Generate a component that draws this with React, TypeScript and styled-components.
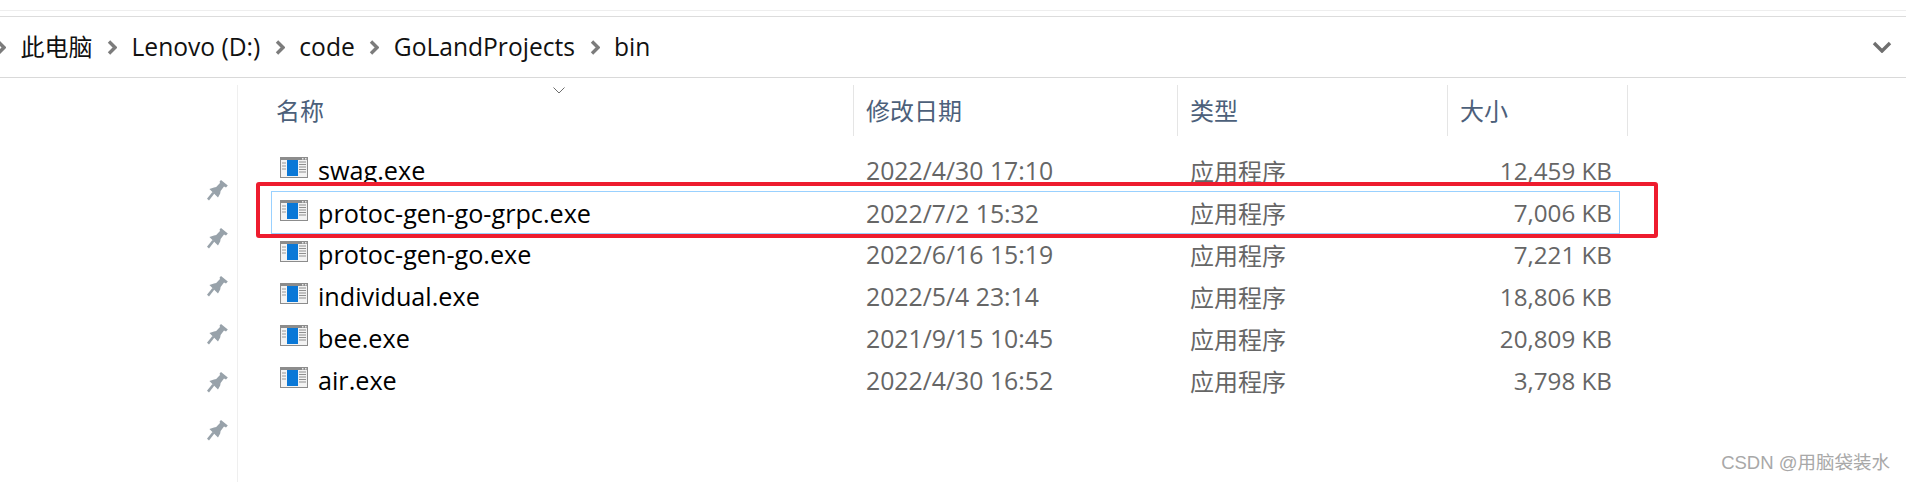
import React from "react";
import styled, { createGlobalStyle } from "styled-components";

const files = [
  { name: "swag.exe", date: "2022/4/30 17:10", size: "12,459 KB" },
  { name: "protoc-gen-go-grpc.exe", date: "2022/7/2 15:32", size: "7,006 KB", selected: true },
  { name: "protoc-gen-go.exe", date: "2022/6/16 15:19", size: "7,221 KB" },
  { name: "individual.exe", date: "2022/5/4 23:14", size: "18,806 KB" },
  { name: "bee.exe", date: "2021/9/15 10:45", size: "20,809 KB" },
  { name: "air.exe", date: "2022/4/30 16:52", size: "3,798 KB" },
];

const crumbs = ["Lenovo (D:)", "code", "GoLandProjects", "bin"];

const ExeIcon = () => (
  <svg width="28" height="21" viewBox="0 0 28 21">
    <rect x="0" y="0" width="28" height="21" fill="#8c8c8c" />
    <rect x="1" y="3" width="26" height="17" fill="#f3f3f3" />
    <rect x="22" y="1" width="1.5" height="1.5" fill="#e6e6e6" />
    <rect x="25" y="1" width="1.5" height="1.5" fill="#e6e6e6" />
    <rect x="7" y="3" width="11" height="16" fill="#0a78d7" />
    <path d="M2 6h4M2 9h4M2 12h4" stroke="#9a9a9a" strokeWidth="1.2" />
    <path d="M19 5h7M19 7.5h7M19 10h7M19 12.5h7M19 15h7" stroke="#8f8f8f" strokeWidth="1.1" />
  </svg>
);

const PinIcon = () => (
  <svg width="22" height="21" viewBox="0 0 22 21">
    <path
      d="M14 0 L20.8 5.6 L19 7.4 L17 6.6 L13.6 11 L13.2 13.4 L11 17.6 L2.4 9 L7 7.4 L9.2 7 L13 3 L12.6 1.5 Z"
      fill="#98a2aa"
    />
    <path d="M6.4 12.8 L1 19.6" stroke="#98a2aa" strokeWidth="2.6" />
  </svg>
);

const CrumbChevron = () => (
  <svg width="10" height="15" viewBox="0 0 10 15">
    <path d="M2 1.5 L8 7.5 L2 13.5" fill="none" stroke="#7c7c7c" strokeWidth="3.4" />
  </svg>
);

export default function App() {
  return (
    <Page>
      <GlobalStyle />
      <TopStrip />
      <AddressBar>
        <Crumbs>
          <CrumbChevron />
          <CjkCrumb>此电脑</CjkCrumb>
          {crumbs.map((crumb) => (
            <React.Fragment key={crumb}>
              <CrumbChevron />
              <Crumb>{crumb}</Crumb>
            </React.Fragment>
          ))}
        </Crumbs>
        <svg width="20" height="12" viewBox="0 0 20 12">
          <path d="M2 2 L10 10 L18 2" fill="none" stroke="#6f6f6f" strokeWidth="3.4" />
        </svg>
      </AddressBar>
      <Body>
        <Sidebar>
          {files.map((f) => (
            <PinSlot key={f.name}>
              <PinIcon />
            </PinSlot>
          ))}
        </Sidebar>
        <FileList>
          <SortArrow width="12" height="7" viewBox="0 0 12 7">
            <path d="M0.5 0.5 L6 6 L11.5 0.5" fill="none" stroke="#6d6d6d" strokeWidth="1" />
          </SortArrow>
          <HeaderRow>
            <HeaderCell>名称</HeaderCell>
            <HeaderCell>修改日期</HeaderCell>
            <HeaderCell>类型</HeaderCell>
            <HeaderCell>大小</HeaderCell>
          </HeaderRow>
          <Rows>
            {files.map((f) => (
              <FileRow key={f.name} $selected={f.selected}>
                <NameCell>
                  <IconSlot>
                    <ExeIcon />
                  </IconSlot>
                  {f.name}
                </NameCell>
                <DateCell>{f.date}</DateCell>
                <TypeCell>应用程序</TypeCell>
                <SizeCell>{f.size}</SizeCell>
              </FileRow>
            ))}
          </Rows>
          <Highlight />
        </FileList>
      </Body>
      <Watermark>CSDN @用脑袋装水</Watermark>
    </Page>
  );
}

const GlobalStyle = createGlobalStyle`
  html, body {
    margin: 0;
    padding: 0;
    background: #fff;
    overflow: hidden;
  }
`;

const Page = styled.div`
  position: relative;
  width: 1906px;
  height: 482px;
  overflow: hidden;
  background: #fff;
  font-family: "Open Sans", "Noto Sans CJK SC", sans-serif;
`;

const TopStrip = styled.div`
  height: 5px;
  margin-top: 10px;
  border-top: 1px solid #eeeeee;
  border-bottom: 1px solid #dcdcdc;
  box-sizing: content-box;
`;

const AddressBar = styled.div`
  height: 60px;
  display: flex;
  align-items: center;
  justify-content: space-between;
  padding-right: 14px;
  border-bottom: 1px solid #d9d9d9;
`;

const Crumbs = styled.div`
  display: flex;
  align-items: center;
  margin-left: -4px;
  gap: 14.5px;
  font-size: 24.6px;
  color: #111;
`;

const Crumb = styled.span`
  line-height: 1;
`;

const CjkCrumb = styled(Crumb)`
  font-size: 24px;
`;

const Body = styled.div`
  display: flex;
  height: 404px;
`;

const Sidebar = styled.div`
  width: 238px;
  flex: none;
  box-sizing: border-box;
  padding: 95px 8px 0 0;
  display: flex;
  flex-direction: column;
  align-items: flex-end;
  gap: 27px;
  border-right: 1px solid #efefef;
  margin-top: 7px;
`;

const PinSlot = styled.div`
  height: 21px;
  display: flex;
`;

const FileList = styled.div`
  position: relative;
  padding: 7px 0 0 33px;
`;

const SortArrow = styled.svg`
  position: absolute;
  left: 315px;
  top: 9px;
`;

const HeaderRow = styled.div`
  display: grid;
  grid-template-columns: 582px 324px 270px 181px;
  height: 51px;
`;

const HeaderCell = styled.div`
  display: flex;
  align-items: center;
  padding: 0 0 3px 12px;
  font-size: 24px;
  color: #4c607a;
  & + & {
    border-left: 1px solid #e5e5e5;
  }
  &:first-child {
    padding-left: 5px;
  }
  &:last-child {
    border-right: 1px solid #e5e5e5;
  }
`;

const Rows = styled.div`
  margin-top: 13px;
  width: 1349px;
`;

const FileRow = styled.div<{ $selected?: boolean }>`
  box-sizing: border-box;
  display: grid;
  grid-template-columns: 582px 324px 270px 173px;
  height: ${(p) => (p.$selected ? "43px" : "42px")};
  align-items: center;
  border: 1px solid ${(p) => (p.$selected ? "#99d1ff" : "transparent")};
  margin: ${(p) => (p.$selected ? "0 0 -1px" : "0")};
`;

const NameCell = styled.div`
  display: flex;
  align-items: center;
  padding-left: 8px;
  font-size: 25.2px;
  color: #000;
`;

const IconSlot = styled.span`
  display: flex;
  margin: -5px 10px 0 0;
`;

const DateCell = styled.div`
  padding-left: 12px;
  font-size: 24.8px;
  color: #666;
`;

const TypeCell = styled.div`
  padding-left: 12px;
  font-size: 24px;
  color: #666;
`;

const SizeCell = styled.div`
  text-align: right;
  padding-right: 9px;
  font-size: 24.2px;
  color: #666;
`;

const Highlight = styled.div`
  position: absolute;
  left: 18px;
  top: 104px;
  width: 1402px;
  height: 56px;
  box-sizing: border-box;
  border: 4px solid #ee1c2e;
  border-radius: 3px;
  pointer-events: none;
`;

const Watermark = styled.div`
  position: absolute;
  right: 16px;
  top: 452px;
  font-family: "Liberation Sans", "Noto Sans CJK SC", sans-serif;
  font-size: 18.5px;
  line-height: 22px;
  color: #a8a8a8;
`;
